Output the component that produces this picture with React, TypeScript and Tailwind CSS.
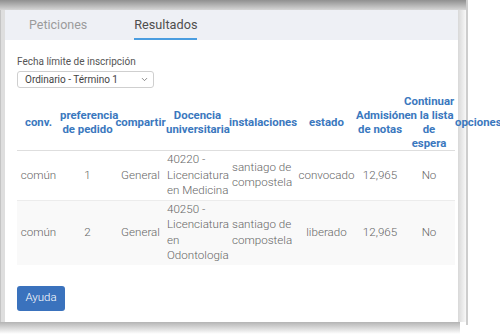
import { ChevronDown } from 'lucide-react';

type Row = {
  conv: string;
  pref: string;
  share: string;
  degree: string[];
  place: string[];
  status: string;
  grade: string;
  waitlist: string;
};

const rows: Row[] = [
  {
    conv: 'común',
    pref: '1',
    share: 'General',
    degree: ['40220 -', 'Licenciatura', 'en Medicina'],
    place: ['santiago de', 'compostela'],
    status: 'convocado',
    grade: '12,965',
    waitlist: 'No',
  },
  {
    conv: 'común',
    pref: '2',
    share: 'General',
    degree: ['40250 -', 'Licenciatura', 'en', 'Odontología'],
    place: ['santiago de', 'compostela'],
    status: 'liberado',
    grade: '12,965',
    waitlist: 'No',
  },
];

// header lines are fixed so the wrapping matches the original table
const headers = [
  { lines: ['conv.'], w: 'w-[43px]' },
  { lines: ['preferencia', 'de pedido'], w: 'w-[55px]' },
  { lines: ['compartir'], w: 'w-[51px]' },
  { lines: ['Docencia', 'universitaria'], w: 'w-[63px]' },
  { lines: ['instalaciones'], w: 'w-[68px]' },
  { lines: ['estado'], w: 'w-[59px]' },
  { lines: ['Admisión', 'de notas'], w: 'w-[48px]' },
  { lines: ['Continuar', 'en la lista', 'de', 'espera'], w: 'w-[50px]' },
];

const ResultsTable = () => {
  return (
    <table className="w-[438px] table-fixed border-collapse">
      <thead>
        <tr className="border-b border-[#dedede]">
          {headers.map(h => (
            <th
              key={h.lines[0]}
              className={`${h.w} px-0 py-0 text-center align-middle text-[11.4px] font-bold leading-[14px] whitespace-nowrap text-[#3b78be]`}
            >
              {h.lines.map(l => (
                <div key={l}>{l}</div>
              ))}
            </th>
          ))}
          <th className="w-[1px] px-0 pl-[1px] text-left align-middle text-[11.4px] font-bold leading-[14px] whitespace-nowrap text-[#3b78be]">
            opciones
          </th>
        </tr>
      </thead>
      <tbody className="text-[11.6px] leading-[15.5px] font-light text-[#666]">
        {rows.map((r, i) => (
          <tr key={i} className={i % 2 === 1 ? 'bg-[#f9f9f9]' : 'border-b border-[#ececec]'}>
            <td className="py-[1px] text-center">{r.conv}</td>
            <td className="py-[1px] text-center">{r.pref}</td>
            <td className="py-[1px] text-center">{r.share}</td>
            <td className="py-[1px] pl-[1px] text-left whitespace-nowrap">
              {r.degree.map(l => (
                <div key={l}>{l}</div>
              ))}
            </td>
            <td className="py-[1px] pl-[3px] text-left whitespace-nowrap">
              {r.place.map(l => (
                <div key={l}>{l}</div>
              ))}
            </td>
            <td className="py-[1px] text-center">{r.status}</td>
            <td className="py-[1px] text-center">{r.grade}</td>
            <td className="py-[1px] text-center">{r.waitlist}</td>
            <td className="p-0" />
          </tr>
        ))}
      </tbody>
    </table>
  );
};

export default function App() {
  return (
    <div className="flex h-[334px] w-[500px] overflow-hidden bg-white font-['Roboto','Liberation_Sans',sans-serif]">
      <div className="flex w-[466px] flex-col">
        <div className="h-[10px] w-full bg-gradient-to-b from-[#909090] to-[#d6d6d6]" />
        <div className="flex h-[312px]">
          <div className="w-[5px] border-l border-[#c4c4c4] bg-[#dedede]" />
          <div className="relative z-10 flex w-[453px] flex-col bg-white">
            <div className="flex h-[30px] items-end bg-[#eef0f5] pl-[24px]">
              <div className="pb-[8px] text-[12.5px] leading-[14px] text-[#9b9b9b]">Peticiones</div>
              <div className="ml-[47px] border-b-2 border-[#4a9de0] pb-[6px] text-[12.7px] leading-[14px] text-[#4e4e4e]">
                Resultados
              </div>
            </div>
            <div className="flex flex-col pl-[12px] pt-[16px]">
              <label className="text-[10px] leading-[12px] text-[#555]">Fecha límite de inscripción</label>
              <div className="mt-[3px] flex h-[17px] w-[137px] items-center justify-between rounded-[3px] border border-[#cfcfcf] pl-[7px] pr-[4px] text-[10px] text-[#444]">
                <span>Ordinario - Término 1</span>
                <ChevronDown className="size-[9px] text-[#666]" strokeWidth={2} />
              </div>
              <div className="mt-[6px]">
                <ResultsTable />
              </div>
              <button className="mt-[21px] h-[25px] w-[48px] rounded-[3px] bg-[#3a72bd] text-[11.5px] font-light text-white">
                Ayuda
              </button>
            </div>
          </div>
          <div className="w-[8px] bg-gradient-to-r from-[#d8d8d8] to-[#f8f8f8]" />
        </div>
        <div className="h-[12px] w-[460px] bg-gradient-to-b from-[#b4b4b4] to-white" />
      </div>
      <div className="h-[325px] w-[2px] bg-[#cdcdcd]" />
    </div>
  );
}
